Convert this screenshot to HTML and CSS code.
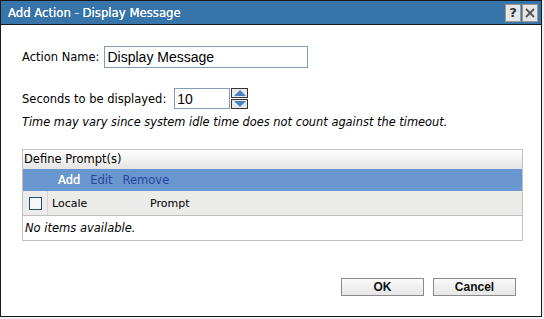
FILE: index.html
```html
<!DOCTYPE html>
<html lang="en">
<head>
  <meta charset="UTF-8" />
  <title>Add Action - Display Message</title>
  <link rel="stylesheet" href="styles.css">
</head>
<body>

<div class="dialog">

  <!-- title bar -->
  <div class="titlebar">
    <span class="title">Add Action - Display Message</span>
    <div class="tools">
      <span class="tool">?</span>
      <span class="tool">
        <svg width="10" height="10" viewBox="0 0 10 10"><path d="M1 1 L9 9 M9 1 L1 9" stroke="#555" stroke-width="1.8" /></svg>
      </span>
    </div>
  </div>

  <div class="content">

    <div class="field">
      <label>Action Name:</label>
      <input type="text" class="name-input" value="Display Message" />
    </div>

    <div class="field seconds">
      <label>Seconds to be displayed:</label>
      <input type="text" class="num-input" value="10" />
      <div class="spin">
        <span class="spin-btn"><svg width="12" height="6" viewBox="0 0 12 6"><path d="M6 0 L12 6 L0 6 Z" fill="#4a7fc1" /></svg></span>
        <span class="spin-btn"><svg width="12" height="6" viewBox="0 0 12 6"><path d="M0 0 L12 0 L6 6 Z" fill="#4a7fc1" /></svg></span>
      </div>
    </div>

    <p class="hint">Time may vary since system idle time does not count against the timeout.</p>

    <!-- prompts table -->
    <div class="grid">
      <div class="grid-title">Define Prompt(s)</div>
      <div class="grid-toolbar">
        <a class="tb-add">Add</a>
        <a>Edit</a>
        <a>Remove</a>
      </div>
      <div class="grid-head">
        <div class="chk-cell"><span class="chk"></span></div>
        <div class="col-locale">Locale</div>
        <div class="col-prompt">Prompt</div>
      </div>
      <div class="grid-empty">No items available.</div>
    </div>

    <div class="actions">
      <button>OK</button>
      <button>Cancel</button>
    </div>

  </div>
</div>

</body>
</html>
```

FILE: styles.css
```css
body {
  margin: 0;
  background: #f0f0f0;
  font-family: 'DejaVu Sans', sans-serif;
  font-size: 11.5px;
  color: #000;
}
.dialog {
  width: 540px;
  height: 315px;
  border: 1px solid #1a1a1a;
  background: white;
  display: flex;
  flex-direction: column;
}
.titlebar {
  height: 23px;
  background: #3674aa;
  border-bottom: 1px solid #1a1a1a;
  display: flex;
  align-items: center;
  justify-content: space-between;
  padding: 0 3px 0 7px;
}
.title {
  color: white;
  font-family: 'DejaVu Sans Condensed', 'DejaVu Sans', sans-serif;
  font-size: 13px;
  text-shadow: 0 0 0.4px white;
}
.tools {
  display: flex;
  gap: 1px;
}
.tool {
  width: 14px;
  height: 16px;
  background: #e6e6e6;
  border: 1px solid #999;
  display: flex;
  align-items: center;
  justify-content: center;
  font-weight: bold;
  font-size: 13px;
  color: #333;
}
.content {
  flex: 1;
  padding: 21px 0 0 21px;
  display: flex;
  flex-direction: column;
}
.field {
  display: flex;
  align-items: center;
}
.field label {
  margin-right: 5px;
}
input {
  font-family: 'Liberation Sans', Arial, sans-serif;
  font-size: 14px;
  border: 1px solid #7f9db9;
  padding: 0 2px;
  margin: 0;
  box-sizing: border-box;
  outline: none;
}
.name-input {
  width: 204px;
  height: 22px;
}
.seconds {
  margin-top: 20px;
}
.seconds label {
  margin-right: 8px;
}
.num-input {
  width: 56px;
  height: 21px;
}
.spin {
  display: flex;
  flex-direction: column;
  gap: 1px;
  margin-left: 1px;
}
.spin-btn {
  width: 15px;
  height: 8px;
  background: #e8e8e8;
  border: 1px solid #333;
  display: flex;
  align-items: center;
  justify-content: center;
}
.hint {
  margin: 6px 0 0;
  font-style: italic;
  font-size: 11.4px;
}
.grid {
  margin-top: 20px;
  width: 499px;
  border: 1px solid #c0c0c0;
}
.grid-title {
  height: 19px;
  line-height: 19px;
  padding-left: 1px;
  background: linear-gradient(#ffffff, #e4e4e4);
}
.grid-toolbar {
  height: 22px;
  background: #6a96cf;
  display: flex;
  align-items: center;
  gap: 10px;
  padding-left: 35px;
  font-size: 11.5px;
}
.grid-toolbar a {
  color: #27489a;
}
.grid-toolbar .tb-add {
  color: white;
  text-shadow: 0 0 0.5px white;
}
.grid-head {
  height: 25px;
  background: #ebebe9;
  border-bottom: 1px solid #c0c0c0;
  display: flex;
  align-items: center;
  font-size: 11px;
  box-sizing: border-box;
}
.chk-cell {
  width: 24px;
  height: 100%;
  border-right: 1px solid #d4d4d4;
  display: flex;
  align-items: center;
  justify-content: center;
}
.chk {
  width: 11px;
  height: 11px;
  border: 1px solid #1f4e79;
  background: #f6f6f6;
}
.col-locale {
  width: 98px;
  padding-left: 4px;
}
.grid-empty {
  height: 24px;
  line-height: 24px;
  padding-left: 2px;
  font-style: italic;
}
.actions {
  margin-top: 37px;
  margin-right: 25px;
  display: flex;
  justify-content: flex-end;
  gap: 9px;
}
.actions button {
  width: 83px;
  height: 18px;
  font-family: 'Liberation Sans', Arial, sans-serif;
  font-weight: bold;
  font-size: 12px;
  background: linear-gradient(#fafafa, #e6e6e6);
  border: 1px solid #8a8a8a;
  padding: 0;
  color: #111;
}
```
